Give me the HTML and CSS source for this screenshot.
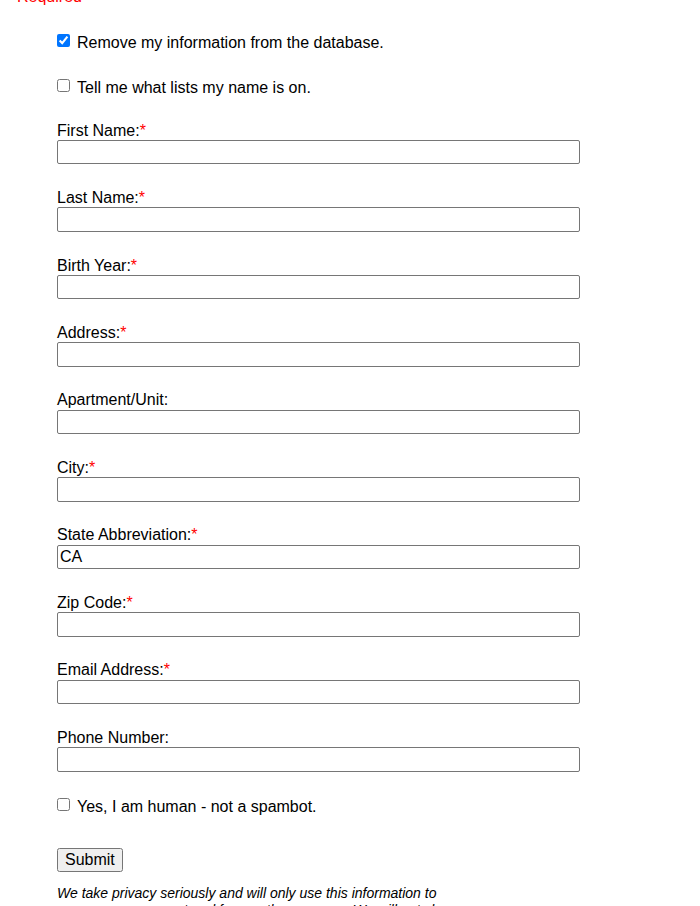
FILE: index.html
```html
<!DOCTYPE html>
<html>
<head>
<meta charset="utf-8">
<link rel="stylesheet" href="styles.css">
</head>
<body>
<div class="page">
  <div class="required">Required</div>
  <form class="form">
    <label class="check first-check"><input type="checkbox" checked><span>Remove my information from the database.</span></label>
    <label class="check"><input type="checkbox"><span>Tell me what lists my name is on.</span></label>
    <div class="fields">
      <div class="field"><label>First Name:<span class="star">*</span></label><input type="text"></div>
      <div class="field"><label>Last Name:<span class="star">*</span></label><input type="text"></div>
      <div class="field"><label>Birth Year:<span class="star">*</span></label><input type="text"></div>
      <div class="field"><label>Address:<span class="star">*</span></label><input type="text"></div>
      <div class="field"><label>Apartment/Unit:</label><input type="text"></div>
      <div class="field"><label>City:<span class="star">*</span></label><input type="text"></div>
      <div class="field"><label>State Abbreviation:<span class="star">*</span></label><input type="text" value="CA"></div>
      <div class="field"><label>Zip Code:<span class="star">*</span></label><input type="text"></div>
      <div class="field"><label>Email Address:<span class="star">*</span></label><input type="text"></div>
      <div class="field"><label>Phone Number:</label><input type="text"></div>
    </div>
    <label class="check human"><input type="checkbox"><span>Yes, I am human - not a spambot.</span></label>
    <div class="actions"><button type="button" class="submit">Submit</button></div>
    <p class="privacy">We take privacy seriously and will only use this information to process your request and for no other purpose. We will not share your information with anyone.</p>
  </form>
</div>
</body>
</html>
```

FILE: styles.css
```css
html, body {
  margin: 0;
  padding: 0;
  background: #fff;
}
body {
  font-family: "Liberation Sans", Arial, sans-serif;
  font-size: 16px;
  color: #000;
  overflow: hidden;
}
.page {
  padding-left: 17px;
  margin-top: -11.6px;
}
.required {
  color: #ff0000;
  line-height: 18.4px;
  height: 18.4px;
}
.form {
  padding-left: 40px;
  display: flex;
  flex-direction: column;
  align-items: flex-start;
}
.check {
  display: flex;
  align-items: flex-start;
  line-height: 18.4px;
  margin-top: 26.6px;
}
.check.first-check {
  margin-top: 27.3px;
}
.check input {
  margin: -0.5px 7px 0 0;
  width: 13px;
  height: 13px;
}
.check span {
  white-space: nowrap;
}
.fields {
  display: flex;
  flex-direction: column;
  gap: 24.7px;
  margin-top: 24.1px;
}
.field {
  display: flex;
  flex-direction: column;
}
.field label {
  line-height: 18.4px;
  height: 18.4px;
}
.star {
  color: #ff0000;
}
.field input {
  box-sizing: border-box;
  width: 523px;
  height: 24.4px;
  margin: 0;
  padding: 1px 2px;
  font-family: "Liberation Sans", Arial, sans-serif;
  font-size: 16px;
  border: 1px solid #767676;
  border-radius: 2px;
  background: #fff;
  color: #000;
  outline: none;
}
.check.human {
  margin-top: 26.8px;
}
.actions {
  margin-top: 31.2px;
}
.submit {
  margin: 0;
  font-family: "Liberation Sans", Arial, sans-serif;
  font-size: 16px;
  color: #000;
}
.privacy {
  margin: 13.5px 0 0;
  width: 420px;
  font-size: 14px;
  font-style: italic;
  line-height: 16.1px;
}
```
